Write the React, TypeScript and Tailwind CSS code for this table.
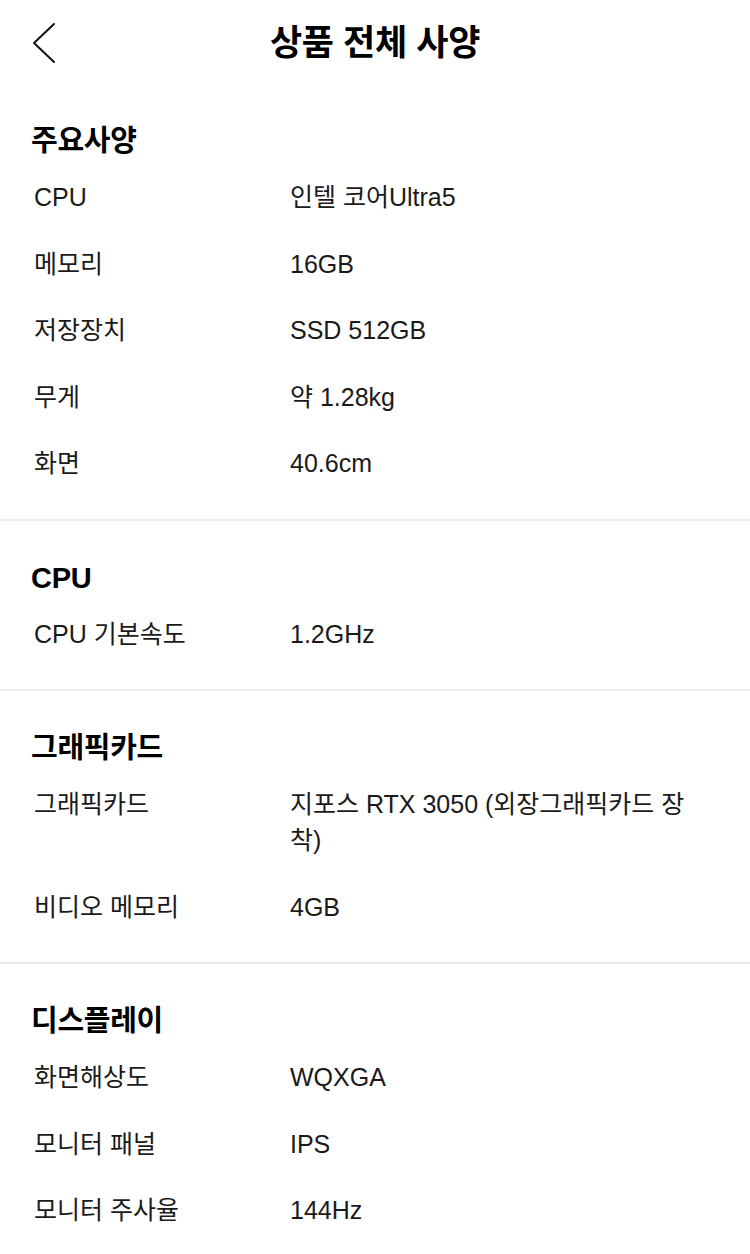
import React from "react";

type Row = { label: string; value: string };
type Section = { title: string; rows: Row[] };

const sections: Section[] = [
  {
    title: "주요사양",
    rows: [
      { label: "CPU", value: "인텔 코어Ultra5" },
      { label: "메모리", value: "16GB" },
      { label: "저장장치", value: "SSD 512GB" },
      { label: "무게", value: "약 1.28kg" },
      { label: "화면", value: "40.6cm" },
    ],
  },
  {
    title: "CPU",
    rows: [{ label: "CPU 기본속도", value: "1.2GHz" }],
  },
  {
    title: "그래픽카드",
    rows: [
      { label: "그래픽카드", value: "지포스 RTX 3050 (외장그래픽카드 장착)" },
      { label: "비디오 메모리", value: "4GB" },
    ],
  },
  {
    title: "디스플레이",
    rows: [
      { label: "화면해상도", value: "WQXGA" },
      { label: "모니터 패널", value: "IPS" },
      { label: "모니터 주사율", value: "144Hz" },
    ],
  },
];

const FONT = {
  fontFamily: '"Liberation Sans", "Noto Sans CJK KR", sans-serif',
};

export default function App() {
  return (
    <div className="w-[750px] min-h-[1254px] bg-white text-[#111]" style={FONT}>
      <header className="relative flex h-[86px] items-center justify-center">
        <svg
          className="absolute left-[30px] top-[21px]"
          width="28"
          height="44"
          viewBox="0 0 28 44"
          fill="none"
        >
          <path d="M24 3 L4 22 L24 41" stroke="#111" strokeWidth="2" strokeLinecap="round" strokeLinejoin="round" />
        </svg>
        <h1 className="text-[35px] font-bold leading-[42px] tracking-[-0.3px] text-black">
          상품 전체 사양
        </h1>
      </header>
      {sections.map((s, i) => (
        <section
          key={s.title}
          className={
            i === 0
              ? "pt-[35px] pb-[22px]"
              : "border-t-2 border-[#ececec] pt-[37px] pb-[22px]"
          }
        >
          <h2 className="mb-[3px] px-[31px] text-[29px] font-bold leading-[40px] tracking-[-0.3px] text-black">
            {s.title}
          </h2>
          {s.rows.map((r) => (
            <div key={r.label} className="flex px-[34px] py-[15.25px] text-[25px] leading-[36px] text-[#1a1a1a]">
              <div className="w-[256px] shrink-0">{r.label}</div>
              <div className="w-[410px]">{r.value}</div>
            </div>
          ))}
        </section>
      ))}
    </div>
  );
}
